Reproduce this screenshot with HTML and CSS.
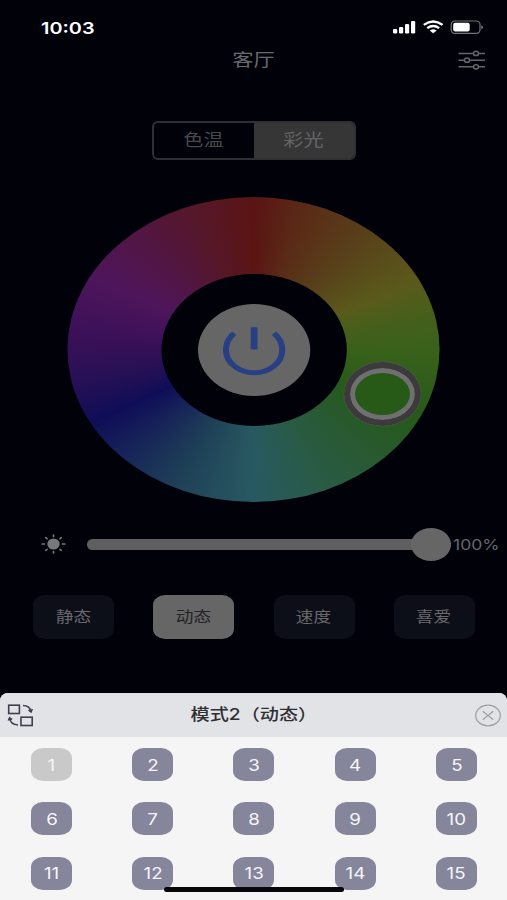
FILE: index.html
```
<!DOCTYPE html>
<html lang="zh-CN">
<head>
<meta charset="utf-8">
<title>客厅</title>
<link rel="stylesheet" href="styles.css">
</head>
<body>
<div class="screen">
  <header class="status">
    <span class="wide time">10:03</span>
    <svg class="status-icons" width="92" height="16" viewBox="0 0 92 16">
      <g fill="#fff">
        <rect x="1" y="9" width="4.200" height="4.500" rx="1.200"/>
        <rect x="7" y="7" width="4.200" height="6.500" rx="1.200"/>
        <rect x="13" y="4" width="4.200" height="9.500" rx="1.200"/>
        <rect x="19" y="1" width="4.200" height="12.500" rx="1.200"/>
        <path d="M41.200 13 L44.300 10.500 Q41.200 8.700 38.100 10.500 Z" stroke="#fff" stroke-width=".6" stroke-linejoin="round"/>
        <rect x="61.200" y="2.700" width="16.500" height="8.900" rx="2"/>
        <path d="M89.300 5.200 Q91.300 5.600 91 7.200 Q91 8.700 89.300 9.200Z" fill="#777"/>
      </g>
      <path d="M31.800 4.900 Q41.200 -2 50.600 4.900 M35.200 8.100 Q41.200 3.700 47.200 8.100" fill="none" stroke="#fff" stroke-width="2.400"/>
      <rect x="59.200" y="1" width="28.800" height="12.300" rx="3.600" fill="none" stroke="#737377" stroke-width="1.200"/>
    </svg>
  </header>
  <nav class="nav">
    <h1 class="wide nav-title">客厅</h1>
    <svg class="settings" width="28" height="20" viewBox="0 0 28 20" fill="none" stroke="#66666a" stroke-width="1.500">
      <path d="M.5 3.400H15.500M20.500 3.400H27M.5 10.200H6.500M11.500 10.200H27M.5 16.800H15.500M20.500 16.800H27"/>
      <ellipse cx="18" cy="3.400" rx="2.500" ry="2.100"/><ellipse cx="9" cy="10.200" rx="2.500" ry="2.100"/><ellipse cx="18" cy="16.800" rx="2.500" ry="2.100"/>
    </svg>
  </nav>
  <div class="segments">
    <div class="segment"><span class="wide">色温</span></div>
    <div class="segment active"><span class="wide">彩光</span></div>
  </div>
  <div class="wheel-area">
    <div class="wheel">
      <div class="hole">
        <div class="power">
          <svg width="54" height="54" viewBox="0 0 54 54" fill="none" stroke="#283f83" stroke-width="5">
            <path d="M10.700 10.300 A23.100 23.100 0 1 0 43.300 10.300"/>
            <path d="M27 4.300V26.500" stroke-width="5.500"/>
          </svg>
        </div>
      </div>
    </div>
    <div class="handle"></div>
  </div>
  <div class="brightness">
    <svg class="sun" width="25" height="20" viewBox="0 0 25 20" fill="#78787a" stroke="#78787a">
      <ellipse cx="12.500" cy="10" rx="6.200" ry="5.500" stroke="none"/>
      <path d="M12.500 1V2.500M12.500 17.500V19M1.200 10H3.500M21.500 10H23.800M4.800 3.700L6 4.700M20.200 3.700L19 4.700M4.800 16.300L6 15.300M20.200 16.300L19 15.300" stroke-width="1.700" stroke-linecap="round"/>
    </svg>
    <div class="track"><div class="knob"></div></div>
    <span class="wide percent">100%</span>
  </div>
  <div class="modes">
    <div class="mode"><span class="wide">静态</span></div>
    <div class="mode active"><span class="wide">动态</span></div>
    <div class="mode"><span class="wide">速度</span></div>
    <div class="mode"><span class="wide">喜爱</span></div>
  </div>
  <section class="sheet">
    <div class="sheet-head">
      <svg width="27" height="24" viewBox="0 0 27 24" fill="none" stroke="#3c4050" stroke-width="1.600">
        <rect x="1.700" y="2.200" width="10.700" height="8.300"/>
        <rect x="14" y="14.200" width="11.200" height="8.300"/>
        <path d="M16 2.500Q22.500 2.500 23.800 8M21.500 7L24 9L25.300 6M11 22Q3.500 21.500 2.800 15.500M1.300 17.500L2.600 14.800L5 16.700"/>
      </svg>
      <h2 class="wide">模式2（动态）</h2>
      <svg width="28" height="24" viewBox="0 0 28 24" fill="none" stroke="#a0a0a5" stroke-width="1.300">
        <ellipse cx="14" cy="12.500" rx="12.300" ry="10.300"/>
        <path d="M8.800 8.200L19.200 16.800M19.200 8.200L8.800 16.800"/>
      </svg>
    </div>
    <div class="grid">
      <div class="chip selected"><span class="wide">1</span></div>
      <div class="chip"><span class="wide">2</span></div>
      <div class="chip"><span class="wide">3</span></div>
      <div class="chip"><span class="wide">4</span></div>
      <div class="chip"><span class="wide">5</span></div>
      <div class="chip"><span class="wide">6</span></div>
      <div class="chip"><span class="wide">7</span></div>
      <div class="chip"><span class="wide">8</span></div>
      <div class="chip"><span class="wide">9</span></div>
      <div class="chip"><span class="wide">10</span></div>
      <div class="chip"><span class="wide">11</span></div>
      <div class="chip"><span class="wide">12</span></div>
      <div class="chip"><span class="wide">13</span></div>
      <div class="chip"><span class="wide">14</span></div>
      <div class="chip"><span class="wide">15</span></div>
    </div>
    <div class="home-bar"></div>
  </section>
</div>
</body>
</html>
```
FILE: styles.css
```
* { box-sizing: border-box; }
body { margin: 0; background: #01010a; }
h1, h2 { margin: 0; font-weight: 400; }
svg { display: block; flex: none; }

.screen {
  width: 507px;
  height: 900px;
  display: flex;
  flex-direction: column;
  overflow: hidden;
  background: #01010a;
  font-family: Inter, "Noto Sans CJK SC", sans-serif;
}
.wide {
  display: inline-block;
  transform: scaleX(1.22);
  white-space: nowrap;
  line-height: 1;
}

.status {
  height: 46px;
  padding: 20px 23px 0 41px;
  display: flex;
  justify-content: space-between;
  align-items: flex-start;
}
.time {
  transform-origin: left center;
  color: #fff;
  font-size: 16.3px;
  font-weight: 600;
}

.nav {
  height: 28px;
  padding: 0 21px 0 49px;
  display: flex;
  align-items: center;
  justify-content: space-between;
}
.nav-title { flex: 1; text-align: center; color: #69696c; font-size: 17.5px; }

.segments {
  width: 204px;
  height: 39px;
  margin: 47px auto 0;
  display: flex;
  border: 2px solid #303034;
  border-radius: 6px;
  overflow: hidden;
}
.segment {
  flex: 1;
  display: flex;
  align-items: center;
  justify-content: center;
  color: #48484b;
  font-size: 16.5px;
}
.segment.active { background: #363637; color: #646466; }

.wheel-area {
  position: relative;
  width: 372px;
  height: 305px;
  margin: 37px auto 0;
  display: flex;
  justify-content: center;
}
.wheel {
  width: 305px;
  height: 305px;
  flex: none;
  display: grid;
  place-items: center;
  transform: scaleX(1.22);
  border-radius: 50%;
  background: conic-gradient(#5a1414 0deg, #5a2a17 16deg, #58401a 38deg, #5a5a1b 63deg, #445f1b 78deg, #38611a 92deg, #265a19 115deg, #28592b 132deg, #295b48 160deg, #285961 180deg, #1e4057 205deg, #151d59 230deg, #0f0d57 241deg, #261055 257deg, #3a1058 275deg, #4e155b 299deg, #52163e 325deg, #561728 342deg, #5a1414 360deg);
}
.hole {
  width: 152px;
  height: 152px;
  display: grid;
  place-items: center;
  border-radius: 50%;
  background: #01010a;
}
.power {
  width: 92px;
  height: 92px;
  display: grid;
  place-items: center;
  border-radius: 50%;
  background: #666;
}
.handle {
  position: absolute;
  left: 276px;
  top: 165px;
  width: 77px;
  height: 64px;
  border: 6px solid #3c3a3d;
  border-radius: 50%;
  background: #265a16;
  box-shadow: inset 0 0 0 5px #706e70, 0 0 1px #77706e;
}

.brightness {
  height: 36px;
  margin-top: 24px;
  padding-left: 41px;
  display: flex;
  align-items: center;
}
.track {
  position: relative;
  width: 364px;
  height: 11px;
  margin-left: 21px;
  border-radius: 6px;
  background: #5f5f61;
}
.knob {
  position: absolute;
  right: 0;
  top: -11px;
  width: 40px;
  height: 33px;
  border-radius: 50%;
  background: #666;
}
.percent {
  margin-left: 2px;
  transform-origin: left center;
  transform: scaleX(1.17);
  color: #67676a;
  font-size: 15px;
}

.modes {
  margin-top: 33px;
  padding: 0 32px 0 33px;
  display: flex;
  justify-content: space-between;
}
.mode {
  width: 81px;
  height: 44px;
  padding-right: 1px;
  display: flex;
  align-items: center;
  justify-content: center;
  border-radius: 12px / 10px;
  background: #0c0f18;
  color: #68696c;
  font-size: 14.5px;
}
.mode.active { background: #666; color: #222325; }

.sheet {
  position: relative;
  height: 207px;
  margin-top: auto;
  border-radius: 8px 8px 0 0;
  overflow: hidden;
  background: #f5f5f6;
}
.sheet-head {
  height: 44px;
  padding: 0 5px 0 7px;
  display: flex;
  align-items: center;
  justify-content: space-between;
  background: #e2e3e7;
}
.sheet-head h2 { color: #2d2e32; font-size: 15.7px; font-weight: 500; }
.grid {
  padding: 11px 0 0 1px;
  display: grid;
  grid-template-columns: repeat(5, 1fr);
  row-gap: 21.3px;
  justify-items: center;
}
.chip {
  width: 41px;
  height: 33px;
  display: flex;
  align-items: center;
  justify-content: center;
  border-radius: 12px / 10px;
  background: #85859c;
  color: #f6f6fa;
  font-size: 16px;
}
.chip .wide { transform: scaleX(1.17); }
.chip.selected { background: #c9c9ca; }
.home-bar {
  position: absolute;
  left: 164px;
  bottom: 8px;
  width: 180px;
  height: 5px;
  border-radius: 3px;
  background: #08080a;
}
```
